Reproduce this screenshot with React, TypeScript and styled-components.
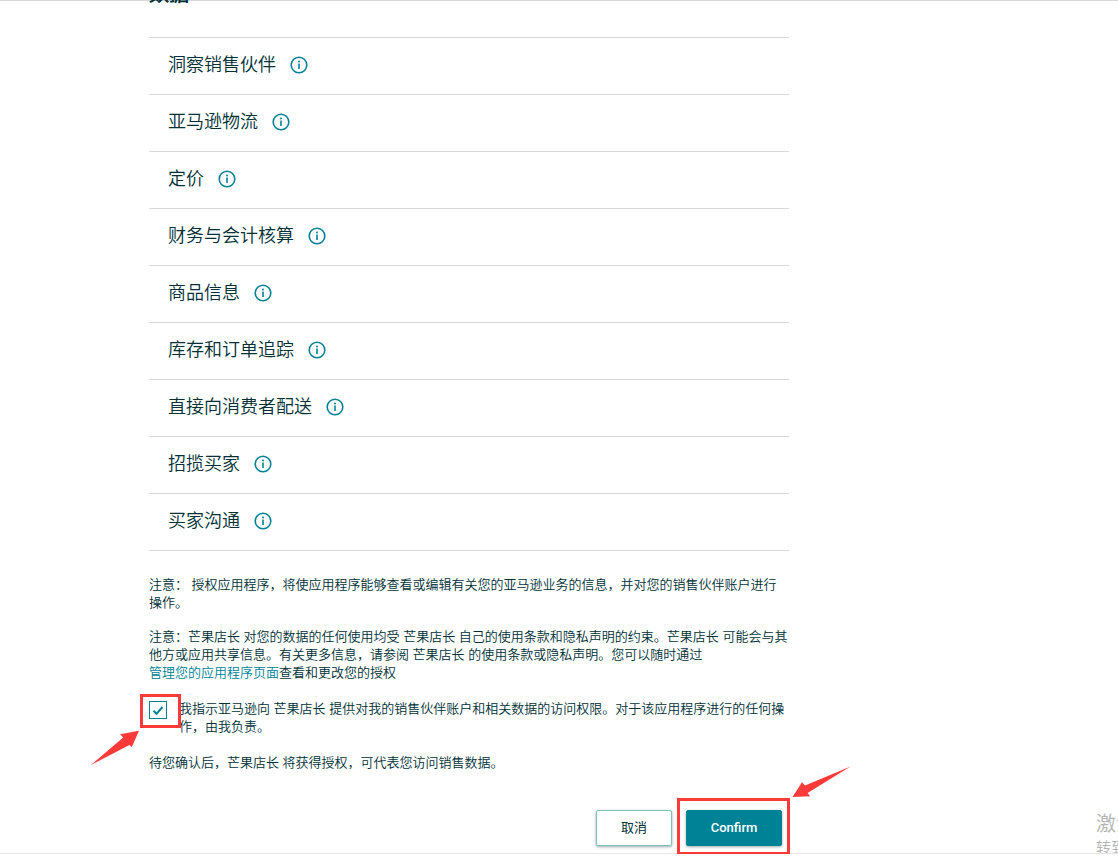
import React from "react";
import styled, { createGlobalStyle } from "styled-components";

const INK = "#002f36";
const TEAL = "#008296";
const RED = "#fd3a3a";

const GlobalStyle = createGlobalStyle`
  * { box-sizing: border-box; }
  body {
    margin: 0;
    background: #fff;
    color: ${INK};
    font-family: "Liberation Sans", "Noto Sans CJK SC DemiLight", "Noto Sans CJK SC", sans-serif;
    font-size: 13px;
    font-weight: 350;
    line-height: 18px;
  }
`;

const Viewport = styled.main`
  position: relative;
  border-top: 1px solid #d5d9dc;
  border-bottom: 1px solid #e3e5e6;
  padding: 0 20px 7px 149px;
`;

const Column = styled.div`
  max-width: 640px;
`;

const Heading = styled.h2`
  margin: -19px 0 11px;
  font-size: 20px;
  line-height: 24px;
  padding-bottom: 20px;
  font-weight: 700;
`;

const RoleList = styled.ul`
  list-style: none;
  margin: 0;
  padding: 0;
  border-top: 1px solid #d5d9dc;
`;

const RoleRow = styled.li`
  display: flex;
  align-items: center;
  gap: 14px;
  height: 57px;
  padding: 0 20px 2px 19px;
  border-bottom: 1px solid #d5d9dc;
  font-size: 18px;
  line-height: 24px;
`;

const InfoButton = styled.button`
  display: flex;
  padding: 0;
  border: 0;
  background: none;
  color: ${TEAL};
  cursor: pointer;
`;

const Notes = styled.div`
  display: flex;
  flex-direction: column;
  gap: 16px;
  padding-top: 25px;
`;

const Paragraph = styled.p`
  margin: 0;
`;

const ManageLink = styled.a`
  display: inline-block;
  color: ${TEAL};
  text-decoration: none;
`;

const Consent = styled.div`
  display: flex;
  align-items: flex-start;
  gap: 12px;
  margin: 18px 0;
`;

const Highlight = styled.div`
  position: relative;
  z-index: 1;
  display: flex;
`;

const Frame = styled.span<{ $x: number; $y: number; $bottom: number }>`
  position: absolute;
  inset: ${(p) => `-${p.$y}px -${p.$x}px -${p.$bottom}px -9px`};
  border: 3px solid ${RED};
  pointer-events: none;
`;

const Arrow = styled.svg<{ $left: number; $top: number }>`
  position: absolute;
  left: ${(p) => p.$left}px;
  top: ${(p) => p.$top}px;
  fill: ${RED};
  pointer-events: none;
`;

const Checkbox = styled.input`
  appearance: none;
  width: 18px;
  height: 18px;
  margin: 1px 0 0;
  border: 1px solid ${TEAL};
  background: #fff;
`;

const Tick = styled.svg`
  position: absolute;
  left: 3px;
  top: 5px;
  fill: none;
  stroke: ${TEAL};
  stroke-width: 2;
  pointer-events: none;
`;

const Actions = styled.div`
  display: flex;
  justify-content: flex-end;
  gap: 14px;
  padding: 38px 7px 0 0;
`;

const Button = styled.button<{ $primary?: boolean }>`
  height: 36px;
  width: ${(p) => (p.$primary ? 96 : 76)}px;
  padding: 0;
  border: 1px solid ${(p) => (p.$primary ? TEAL : "#7fc0b8")};
  border-radius: 2px;
  background: ${(p) => (p.$primary ? TEAL : "#fff")};
  color: ${(p) => (p.$primary ? "#fff" : INK)};
  font-family: Roboto, "Noto Sans CJK SC", sans-serif;
  font-size: 13px;
  font-weight: ${(p) => (p.$primary ? 500 : 400)};
  line-height: 18px;
  box-shadow: 0 1px 3px rgba(0, 47, 54, 0.4);
  cursor: pointer;
`;

const WatermarkClip = styled.div`
  position: absolute;
  right: 0;
  bottom: 0;
  width: 22px;
  height: 43px;
  overflow: hidden;
  color: #b4b4b4;
  white-space: nowrap;
`;

const WatermarkTitle = styled.div`
  font-size: 20px;
  line-height: 28px;
`;

const WatermarkText = styled.div`
  font-size: 15px;
  line-height: 20px;
`;

const roles = [
  "洞察销售伙伴",
  "亚马逊物流",
  "定价",
  "财务与会计核算",
  "商品信息",
  "库存和订单追踪",
  "直接向消费者配送",
  "招揽买家",
  "买家沟通",
];

function InfoIcon() {
  return (
    <svg width="18" height="18" viewBox="0 0 18 18" fill="none" aria-hidden="true">
      <circle cx="9" cy="9" r="7.8" stroke="currentColor" strokeWidth="1.6" />
      <path d="M9 7.6v5.4" stroke="currentColor" strokeWidth="1.6" />
      <circle cx="9" cy="5.4" r="1" fill="currentColor" />
    </svg>
  );
}

export default function App() {
  return (
    <>
      <GlobalStyle />
      <Viewport>
        <Column>
          <Heading>数据</Heading>
          <RoleList>
            {roles.map((role) => (
              <RoleRow key={role}>
                <span>{role}</span>
                <InfoButton type="button" aria-label={role}>
                  <InfoIcon />
                </InfoButton>
              </RoleRow>
            ))}
          </RoleList>
          <Notes>
            <Paragraph>
              注意： 授权应用程序，将使应用程序能够查看或编辑有关您的亚马逊业务的信息，并对您的销售伙伴账户进行操作。
            </Paragraph>
            <Paragraph>
              注意：芒果店长 对您的数据的任何使用均受 芒果店长 自己的使用条款和隐私声明的约束。芒果店长 可能会与其他方或应用共享信息。有关更多信息，请参阅 芒果店长 的使用条款或隐私声明。您可以随时通过
              <ManageLink href="#apps">管理您的应用程序页面</ManageLink>
              查看和更改您的授权
            </Paragraph>
          </Notes>
          <Consent>
            <Highlight>
              <Checkbox type="checkbox" id="consent" defaultChecked />
              <Tick width="12" height="11" viewBox="0 0 12 11" aria-hidden="true">
                <path d="M1.5 5.8l3 3L10.5 2" />
              </Tick>
              <Frame $x={14} $y={6} $bottom={9} />
              <Arrow $left={-59} $top={30} width="52" height="36" viewBox="0 0 52 36" aria-hidden="true">
                <path d="M49 .8L30 4.3l3.2 3.2L1 35l38.4-20 2.4 2z" />
              </Arrow>
            </Highlight>
            <label htmlFor="consent">
              我指示亚马逊向 芒果店长 提供对我的销售伙伴账户和相关数据的访问权限。对于该应用程序进行的任何操作，由我负责。
            </label>
          </Consent>
          <Paragraph>待您确认后，芒果店长 将获得授权，可代表您访问销售数据。</Paragraph>
          <Actions>
            <Button type="button">取消</Button>
            <Highlight>
              <Button type="button" $primary>
                Confirm
              </Button>
              <Frame $x={8} $y={12} $bottom={9} />
              <Arrow $left={106} $top={-44} width="60" height="34" viewBox="0 0 60 34" aria-hidden="true">
                <path d="M.5 31L10 16.3l3 3.2L58.5.5 15.6 27l2.6 3.2z" />
              </Arrow>
            </Highlight>
          </Actions>
        </Column>
        <WatermarkClip>
          <WatermarkTitle>激活</WatermarkTitle>
          <WatermarkText>转到</WatermarkText>
        </WatermarkClip>
      </Viewport>
    </>
  );
}
